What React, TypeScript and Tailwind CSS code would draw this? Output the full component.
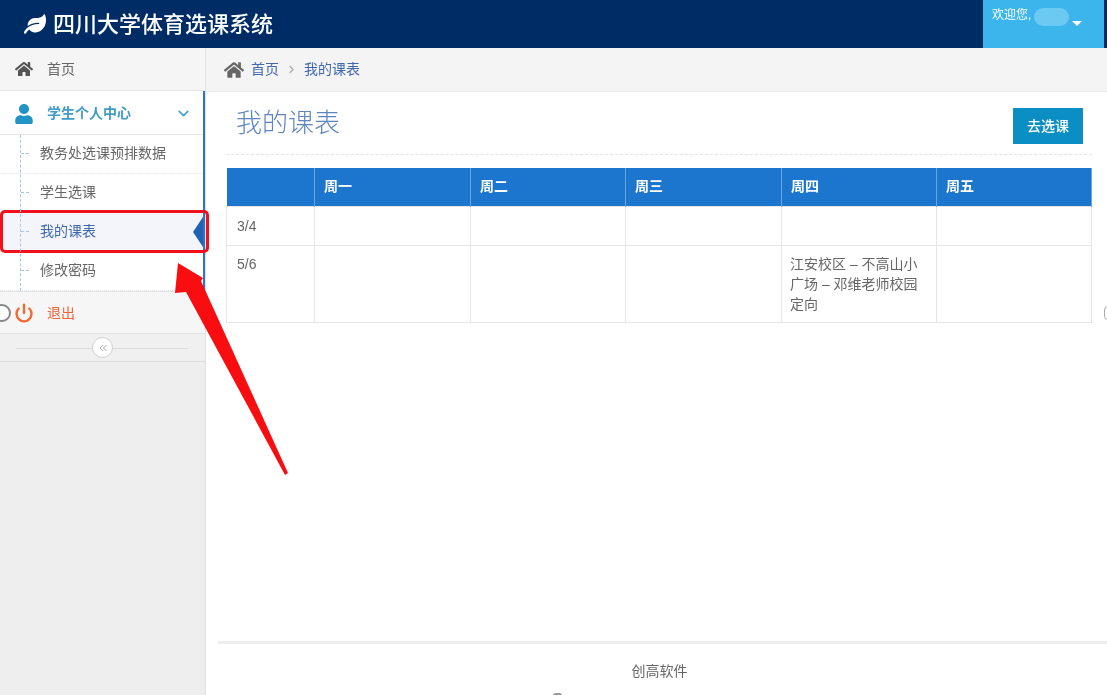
import { ChevronDown, ChevronRight, ChevronsLeft, Power } from 'lucide-react';
import { FaHome, FaLeaf, FaUser } from 'react-icons/fa';

const font = { fontFamily: '"Liberation Sans", "Noto Sans CJK SC", sans-serif' };

const subItems = ['教务处选课预排数据', '学生选课', '我的课表', '修改密码'];
const days = ['周一', '周二', '周三', '周四', '周五'];

function SubItem({ label, active }: { label: string; active: boolean }) {
  return (
    <li className={`relative flex h-[39px] items-center border-b border-dotted border-[#e4e4e4] pb-[2px] pl-10 text-[14px] ${active ? 'bg-[#f3f5fa] text-[#3f68ad]' : 'bg-white text-[#666]'}`}>
      <span className="absolute left-[21px] top-[18px] w-[8px] border-t border-dashed border-[#a9c7e4]" />
      {label}
      {active && (
        <span className="absolute right-0 top-[4px] h-0 w-0 border-y-[15px] border-r-[10px] border-y-transparent border-r-[#1d62b5]" />
      )}
    </li>
  );
}

function Sidebar() {
  return (
    <aside className="flex w-[206px] shrink-0 flex-col border-r border-[#e2e2e2] bg-[#eeeeee]">
      <div className="flex h-[43px] items-center gap-[14px] border-b border-[#e6e6e6] bg-[#f5f5f5] pl-[15px] text-[14px] text-[#666]">
        <FaHome size={18} className="text-[#555]" />
        首页
      </div>

      <div className="relative border-r-2 border-[#2a75c4] bg-white">
        <div className="flex h-[44px] items-center border-b border-[#e6e6e6] pl-[14px] pr-[11px] pt-[2px] text-[14px] font-bold text-[#3f9cc8]">
          <FaUser size={20} className="text-[#2193c4]" />
          <span className="ml-[13px] flex-1">学生个人中心</span>
          <ChevronDown size={17} strokeWidth={2.5} className="text-[#4aa5d0]" />
        </div>
        <ul className="relative">
          <span className="absolute bottom-0 left-[20px] top-0 z-10 border-l border-dashed border-[#a9c7e4]" />
          {subItems.map((item) => (
            <SubItem key={item} label={item} active={item === '我的课表'} />
          ))}
        </ul>
      </div>

      <div className="flex h-[43px] items-center gap-[13px] border-y border-[#e4e4e4] bg-[#f6f6f6] pl-[14px] pt-[1px] text-[14px] text-[#f4623a]">
        <Power size={20} strokeWidth={2.8} className="text-[#f26a30]" />
        退出
      </div>

      <div className="relative flex h-[28px] items-center justify-center border-b border-[#dedede] bg-[#f0f0f0]">
        <span className="absolute left-[16px] right-[17px] top-[14px] border-t border-[#dcdcdc]" />
        <span className="relative flex h-[21px] w-[21px] items-center justify-center rounded-full border border-[#cfcfcf] bg-white text-[#aaa]">
          <ChevronsLeft size={12} />
        </span>
      </div>
    </aside>
  );
}

function ScheduleTable() {
  return (
    <table className="w-[865px] table-fixed border-collapse text-[14px] text-[#666]">
      <colgroup>
        <col className="w-[88px]" />
        <col className="w-[156px]" />
        <col className="w-[155px]" />
        <col className="w-[156px]" />
        <col className="w-[155px]" />
        <col className="w-[155px]" />
      </colgroup>
      <thead>
        <tr className="h-[38px] bg-[#1c76ce] text-left text-[14px] font-bold text-white">
          <th className="border-r border-[#6ba3dc]" />
          {days.map((d) => (
            <th key={d} className="border-r border-[#6ba3dc] pl-[9px] font-bold">
              {d}
            </th>
          ))}
        </tr>
      </thead>
      <tbody>
        <tr className="h-[39px]">
          <td className="border border-[#e6e6e6] pl-[10px] pt-[2px]">3/4</td>
          {days.map((d) => (
            <td key={d} className="border border-[#e6e6e6]" />
          ))}
        </tr>
        <tr className="h-[77px] align-top">
          <td className="border border-[#e6e6e6] pl-[10px] pt-[8px]">5/6</td>
          <td className="border border-[#e6e6e6]" />
          <td className="border border-[#e6e6e6]" />
          <td className="border border-[#e6e6e6]" />
          <td className="border border-[#e6e6e6] pl-[8px] pr-[8px] pt-[8px] leading-[20px]">
            江安校区 – 不高山小广场 – 邓维老师校园定向
          </td>
          <td className="border border-[#e6e6e6]" />
        </tr>
      </tbody>
    </table>
  );
}

function Main() {
  return (
    <main className="flex min-w-0 flex-1 flex-col bg-white">
      <div className="flex h-[44px] items-center border-b border-[#ebebeb] bg-[#f4f4f4] pl-[18px] text-[14px] text-[#3f68ad]">
        <FaHome size={20} className="text-[#666]" />
        <span className="ml-[7px]">首页</span>
        <ChevronRight size={13} className="mx-[6px] text-[#aaa]" />
        <span>我的课表</span>
      </div>

      <div className="flex flex-1 flex-col pl-[20px] pr-[15px]">
        <div className="flex h-[63px] items-start justify-between border-b border-dashed border-[#e4e4e4] pr-[9px]">
          <h1 className="ml-[10px] mt-[15px] text-[26px] font-light leading-[32px] text-[#5f86c0]">我的课表</h1>
          <button className="mt-[16px] h-[36px] w-[70px] bg-[#0a8ec4] text-[14px] font-medium text-white">去选课</button>
        </div>
        <div className="mt-[13px]">
          <ScheduleTable />
        </div>
      </div>

      <footer className="ml-[12px] flex h-[54px] justify-center border-t-[3px] border-[#eeeeee] pt-[17px] text-[14px] leading-[20px] text-[#666]">
        <span className="mr-[6px]">创高软件</span>
      </footer>
    </main>
  );
}

export default function App() {
  return (
    <div className="relative flex h-[695px] w-[1107px] flex-col overflow-hidden bg-white blur-[0.5px]" style={font}>
      <header className="flex h-[48px] shrink-0 items-center justify-between bg-[#002c66] pl-[24px] pr-[3px]">
        <div className="flex items-center gap-[7px] text-[22px] font-medium text-white">
          <FaLeaf size={22} />
          四川大学体育选课系统
        </div>
        <div className="flex h-full w-[121px] items-start bg-[#3bb5ec] pl-[9px] pt-[6px] text-[12px] text-white">
          <span>欢迎您,</span>
          <span className="ml-[3px] mt-[2px] h-[18px] w-[35px] shrink-0 rounded-full bg-[#6cc9f2]" />
          <span className="ml-[3px] mt-[15px] h-0 w-0 border-x-[5px] border-t-[5px] border-x-transparent border-t-white" />
        </div>
      </header>

      <div className="flex min-h-0 flex-1">
        <Sidebar />
        <Main />
      </div>

      {/* screenshot annotations */}
      <div className="absolute left-0 top-[210px] h-[43px] w-[209px] rounded-[5px] border-[3px] border-[#f2101c]" />
      <svg className="absolute left-[170px] top-[258px]" width="125" height="220" viewBox="0 0 125 220">
        <path d="M8 5L33 20L31 23L118 215L115 217L16 34L5 35Z" fill="#f80d10" />
      </svg>
      <span className="absolute -left-[7px] top-[304px] h-[18px] w-[18px] rounded-full border-2 border-[#888] bg-white" />
      <span className="absolute -right-[5px] top-[306px] h-[14px] w-[8px] rounded-full border border-[#aaa]" />
      <span className="absolute -bottom-[3px] left-[553px] h-[5px] w-[9px] rounded-full bg-[#999]" />
    </div>
  );
}
